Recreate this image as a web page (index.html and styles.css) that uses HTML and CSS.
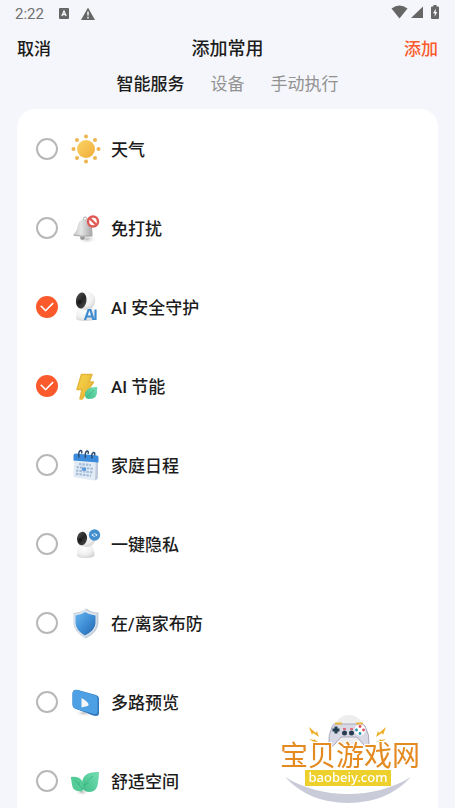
FILE: index.html
```html
<!DOCTYPE html>
<html lang="zh-CN">
<head>
<meta charset="utf-8">
<meta name="viewport" content="width=device-width, initial-scale=1">
<title>添加常用</title>
<link rel="stylesheet" href="styles.css">
</head>
<body>
<div class="status">
  <span class="clock">2:22</span>
  <svg class="status-app" width="12" height="12" viewBox="0 0 12 12"><rect x="1" width="10" height="11" rx="1" fill="#666"/><path d="M3.800 8 6 3l2.200 5M4.500 6.500h3" fill="none" stroke="#f5f6fb" stroke-width="1.300"/></svg>
  <svg class="status-warn" width="14" height="14" viewBox="0 0 14 14"><path d="M7 .5 14 13H0z" fill="#666"/><path d="M7 4.500v4M7 9.800v1.600" stroke="#f5f6fb" stroke-width="1.500"/></svg>
  <span class="status-right">
    <svg width="17" height="14" viewBox="0 0 17 14"><path d="M.5 3.500Q8.500-2.500 16.500 3.500L8.500 13.500z" fill="#666"/></svg>
    <svg width="12" height="14" viewBox="0 0 12 14"><path d="M12 1.500v11.500H0z" fill="#666"/></svg>
    <svg class="battery" width="8" height="14" viewBox="0 0 8 14"><path d="M2.500 0h3v1.500H7q1 0 1 1V13q0 1-1 1H1q-1 0-1-1V2.500q0-1 1-1h1.500z" fill="#666"/><path d="M4.800 3.500 2 8.300h1.700v3.500L6.300 7H4.600z" fill="#f5f6fb"/></svg>
  </span>
</div>
<header class="bar">
  <button class="action" type="button">取消</button>
  <h1 class="title">添加常用</h1>
  <button class="action action-primary" type="button">添加</button>
</header>
<nav class="tabs">
  <button class="tab tab-active" type="button">智能服务</button>
  <button class="tab" type="button">设备</button>
  <button class="tab" type="button">手动执行</button>
</nav>
<main class="card">
  <label class="row"><input class="check" type="checkbox">
    <svg class="icon" viewBox="0 0 32 32"><defs><linearGradient id="sun" x1="0" y1="0" x2="1" y2="1"><stop stop-color="#fbd465"/><stop offset="1" stop-color="#f0ac3a"/></linearGradient></defs><circle cx="16" cy="16" r="9" fill="url(#sun)"/><g fill="#edb550"><circle cx="16" cy="3.500" r="2"/><circle cx="16" cy="28.500" r="2"/><circle cx="3.500" cy="16" r="2"/><circle cx="28.500" cy="16" r="2"/><circle cx="7" cy="7" r="2"/><circle cx="25" cy="7" r="2"/><circle cx="7" cy="25" r="2"/><circle cx="25" cy="25" r="2"/></g></svg>
    <span>天气</span></label>
  <label class="row"><input class="check" type="checkbox">
    <svg class="icon" viewBox="0 0 32 32"><defs><linearGradient id="bell"><stop stop-color="#c4c4c4"/><stop offset=".4" stop-color="#e6e6e6"/><stop offset="1" stop-color="#a4a4a4"/></linearGradient><radialGradient id="shade"><stop stop-color="#bbb"/><stop offset="1" stop-color="#fff" stop-opacity="0"/></radialGradient></defs><ellipse cx="17" cy="27" rx="10" ry="5" fill="url(#shade)"/><rect x="13.500" y="5" width="3.500" height="5" rx="1.700" fill="#fff" stroke="#aaa"/><circle cx="12.500" cy="25.500" r="2.400" fill="#999"/><path d="M8 13q1-6 7-6 7 0 7 7l.5 9q.5 1.500-1 1.600Q12 25 4 24q-1.500-1 0-2 3-3 4-9z" fill="url(#bell)"/><path d="M4 23q8 2 18 .5" stroke="#aaa" fill="none"/><circle cx="23" cy="9.500" r="5" fill="#fff" stroke="#df5a54" stroke-width="2.400"/><path d="m19.500 6 7 7" stroke="#df5a54" stroke-width="2.400"/></svg>
    <span>免打扰</span></label>
  <label class="row"><input class="check" type="checkbox" checked>
    <svg class="icon" viewBox="0 0 32 32"><defs><radialGradient id="cam" cx=".4" cy=".3" r=".8"><stop stop-color="#fff"/><stop offset=".6" stop-color="#efefef"/><stop offset="1" stop-color="#ccc"/></radialGradient><linearGradient id="lens" x1="0" x2="1" y2="1"><stop stop-color="#555"/><stop offset=".5" stop-color="#252525"/><stop offset="1" stop-color="#505050"/></linearGradient></defs><path d="M9 16q-3 4-3 11 0 3 9 3t10-3q0-8-4-11z" fill="url(#cam)"/><ellipse cx="16" cy="9.500" rx="9.300" ry="9.500" fill="url(#cam)"/><ellipse cx="11.300" cy="9.500" rx="5.300" ry="8" fill="url(#lens)" transform="rotate(8 11 9)"/><circle cx="9.500" cy="11" r="2" fill="#191919"/><path d="m15 29 3.500-10h2l3 10m-7-3.500h6M25.500 18.500v10.500" fill="none" stroke="#3c8bd0" stroke-width="2.200"/></svg>
    <span>AI 安全守护</span></label>
  <label class="row"><input class="check" type="checkbox" checked>
    <svg class="icon" viewBox="0 0 32 32"><defs><linearGradient id="bolt" x1="0" y1="0" x2="1" y2="1"><stop stop-color="#f7d84b"/><stop offset="1" stop-color="#e5ad30"/></linearGradient><linearGradient id="leaf" x1="0" y1="1" x2="1" y2="0"><stop stop-color="#41bd89"/><stop offset="1" stop-color="#75dfb3"/></linearGradient></defs><path d="M11.500 4.500 22 4.500 19 12h4.500L12 29H10L12 19.500H7z" fill="url(#bolt)" stroke="#e6b53c" stroke-width="1.500" stroke-linejoin="round"/><path d="M27.500 17q-12.500-.5-12.500 8 0 4 4 4 9 0 8-9z" fill="url(#leaf)"/><path d="m17 27 7-7" fill="none" stroke="#36a779" stroke-width=".6"/></svg>
    <span>AI 节能</span></label>
  <label class="row"><input class="check" type="checkbox">
    <svg class="icon" viewBox="0 0 32 32"><path d="M4 8 28 10l-1 20q-1 2-3 1.500L5 28.500q-1.500-.5-1.500-2z" fill="#e3ebf4"/><path d="m26 10 2 0v19q-1 2.500-3 2z" fill="#bfcbdc"/><path d="M5.500 4.500 27 6.500q1.500 0 1.500 2V13.500L3.500 11.500V6.500q0-2 2-2z" fill="#3b8bdc"/><path d="m9 15 12 1.200M6.500 18l17 2M6 21.500l17.500 2M6 24.800l15 2" fill="none" stroke="#a4bddb" stroke-width="2.200" stroke-dasharray="2.500 1"/><path d="m12 20 4 .5" stroke="#5b99de" stroke-width="3"/><g fill="none" stroke="#29486d" stroke-width="1.400"><path d="M9 8.500q-1-6 1.500-7 2 0 1 3M15.500 9q-1-6 1.500-7 2 0 1 3M22 9.500q-1-5 1.500-6 2 0 1 3"/></g></svg>
    <span>家庭日程</span></label>
  <label class="row"><input class="check" type="checkbox">
    <svg class="icon" viewBox="0 0 32 32"><path d="M10 16q-3 4-3 11 0 3 8 3t9.500-2.500Q24 19 20 16z" fill="url(#cam)"/><ellipse cx="16.500" cy="10.500" rx="9" ry="8.500" fill="url(#cam)"/><ellipse cx="12" cy="10.500" rx="5" ry="6.800" fill="url(#lens)" transform="rotate(8 12 10.500)"/><circle cx="10" cy="12" r="1.800" fill="#191919"/><circle cx="24.500" cy="7" r="5.700" fill="#438fce"/><path d="M21.500 7q3-3.500 6 0-3 3.500-6 0z" fill="#fff"/><circle cx="24.500" cy="7" r="1.200" fill="#438fce"/><path d="m22.500 4.500 4 5" stroke="#438fce" stroke-width=".8"/></svg>
    <span>一键隐私</span></label>
  <label class="row"><input class="check" type="checkbox">
    <svg class="icon" viewBox="0 0 32 32"><defs><linearGradient id="shield" x1="0" y1="0" x2="1" y2="1"><stop stop-color="#69b4ee"/><stop offset=".5" stop-color="#3f8fd6"/><stop offset="1" stop-color="#2464ad"/></linearGradient></defs><path d="M16.500 1.500q5 4 12 4V16q0 9-12.500 15.500Q3.500 25 3.500 16V6q7-.5 13-4.500z" fill="#c3cfdd"/><path d="M15 2.500q5 4 11.500 4V16q0 8-11.500 14Q4 24 4 16V7q6-.5 11-4.500z" fill="#dde4ec"/><path d="M15 5q4.500 3 10.500 3.500V16q0 7-10.500 12.500Q5.500 23 5.500 16V8.500Q11 8 15 5z" fill="url(#shield)"/></svg>
    <span>在/离家布防</span></label>
  <label class="row"><input class="check" type="checkbox">
    <svg class="icon" viewBox="0 0 32 32"><ellipse cx="14" cy="27" rx="9" ry="4" fill="url(#shade)"/><path d="M8 4 26 9q3 1 3 4v14q0 3-3 3-3 0-9-3L6 23q-3.500-1-3.500-5V8q0-5 5.500-4z" fill="#3279bd"/><path d="M7 4 24.500 9Q27.500 10 27.500 13v12.500q0 3-3 2.500L6 23q-3.500-1-3.500-5V8q0-4.500 4.500-4z" fill="#4da0e3"/><path d="M11.500 12q5.500 3 7 6 .5 1.500-1 2l-6 1.500z" fill="#f4f6f8"/></svg>
    <span>多路预览</span></label>
  <label class="row"><input class="check" type="checkbox">
    <svg class="icon" viewBox="0 0 32 32"><ellipse cx="12" cy="27" rx="7" ry="4" fill="url(#shade)"/><path d="M29 7Q13 6 12 18q0 9 7 9 8 0 9-9 1-6 1-11z" fill="url(#leaf)"/><path d="M.8 12q9-1 12 5 2 5-.8 9.500-9 .5-10-6.500z" fill="#54cc98"/><path d="m5 15 8 10 1.500-6L23 11m-9 9 5-2M9 20v-3" fill="none" stroke="#36a878" stroke-width=".6"/></svg>
    <span>舒适空间</span></label>
</main>
<svg class="mark" width="142" height="94" viewBox="0 0 142 94">
  <circle cx="69" cy="18" r="15" fill="#eee"/>
  <path d="M5 65q28 17 63 17t63-17q-24 26-63 26T5 65z" fill="#c9cbd8"/>
  <path d="M57 12q-4-1-5 3-4 8-3 18 3 3 6-1l6-7h16l6 7q3 4 6 1 1-10-4-19-2-3-6-2z" fill="#d8d9e5" stroke="#aaaabd"/>
  <path d="M55 11.500h7m14 0h7" stroke="#e9b63d" stroke-width="2"/>
  <path d="M56 14.500v7m-3.500-3.500h7" stroke="#223f50" stroke-width="3"/>
  <circle cx="80" cy="18" r="5.500" fill="#fff"/><g fill="#dc4e5e"><circle cx="80" cy="14.500" r="1.400"/><circle cx="83.500" cy="18" r="1.400"/></g><g fill="#2997ad"><circle cx="76.500" cy="18" r="1.400"/><circle cx="80" cy="21.500" r="1.400"/></g>
  <path d="M63 17h3m4 0h3" stroke="#dc4e5e" stroke-width="1.500"/><circle cx="64.500" cy="21" r="2.500" fill="#293d50"/><circle cx="71.500" cy="21" r="2.500" fill="#293d50"/>
  <g fill="#edae27"><path d="m29 15 7 6 1-2 2 6-6-4-1 2zM29 27l5 1v-1l4 3-5-.5zM106 15l-7 6-1-2-2 6 6-4 1 2zM106 27l-5 1v-1l-4 3 5-.5z"/></g>
  <rect x="25" y="58" width="86" height="16" fill="#edd02b"/>
  <text class="mark-name" x="0" y="54">宝贝游戏网</text>
  <text class="mark-site" x="68" y="70" text-anchor="middle">baobeiy.com</text>
</svg>
</body>
</html>
```
FILE: styles.css
```css
* { box-sizing: border-box; }

body {
  margin: 0;
  height: 100vh;
  display: flex;
  flex-direction: column;
  overflow: hidden;
  background: #f5f6fb;
  color: #1c1c1c;
  font-family: Roboto, "Noto Sans CJK SC", sans-serif;
  font-size: 17px;
  font-weight: 500;
}

button {
  padding: 0;
  border: 0;
  background: none;
  color: inherit;
  font: inherit;
}

.status {
  display: flex;
  align-items: center;
  height: 27px;
  padding: 0 16px 0 15px;
  flex: none;
}

.clock {
  color: #707070;
  font-size: 15px;
  font-weight: 400;
}

.status-app { margin-left: 14px; }
.status-warn { margin-left: 11px; }

.status-right {
  display: flex;
  align-items: center;
  gap: 3px;
  margin-left: auto;
  margin-bottom: 3px;
}

.battery { margin-left: 5px; }

.bar {
  display: grid;
  grid-template-columns: 1fr auto 1fr;
  align-items: center;
  height: 40px;
  padding: 0 17px;
  flex: none;
}

.action { justify-self: start; }

.action-primary {
  justify-self: end;
  color: #fb5a2c;
}

.title {
  margin: 0;
  font-size: 18px;
  font-weight: 500;
}

.tabs {
  display: flex;
  justify-content: center;
  gap: 26px;
  height: 42px;
  padding: 3px 0 11px;
  line-height: 28px;
  flex: none;
}

.tab {
  color: #929292;
  font-weight: 400;
}

.tab-active {
  color: #1c1c1c;
  font-weight: 500;
}

.card {
  flex: 1;
  min-height: 0;
  margin: 0 17px;
  overflow-y: auto;
  scrollbar-width: none;
  border-radius: 18px 18px 0 0;
  background: #fff;
}

.row {
  display: flex;
  align-items: center;
  height: 79px;
  padding: 0 19px;
}

.check {
  appearance: none;
  display: grid;
  place-items: center;
  width: 22px;
  height: 22px;
  margin: 0 12px 0 0;
  border: 2px solid #b8b8b8;
  border-radius: 50%;
}

.check:checked {
  border-color: #fb5a2c;
  background: #fb5a2c;
}

.check:checked::before {
  content: "";
  width: 10px;
  height: 6px;
  margin-bottom: 3px;
  border: solid #fff;
  border-width: 0 0 2px 2px;
  border-radius: 1px;
  transform: rotate(-45deg);
}

.icon {
  width: 32px;
  height: 32px;
  margin-right: 9px;
}

.mark {
  position: fixed;
  right: 33px;
  bottom: 2px;
}

.mark-name {
  fill: #e48a20;
  stroke: #fff;
  stroke-width: 2px;
  paint-order: stroke;
  font-size: 28px;
  font-weight: 400;
}

.mark-site {
  fill: #fff;
  font-family: "Noto Sans", sans-serif;
  font-size: 13px;
  font-weight: 500;
}
```
